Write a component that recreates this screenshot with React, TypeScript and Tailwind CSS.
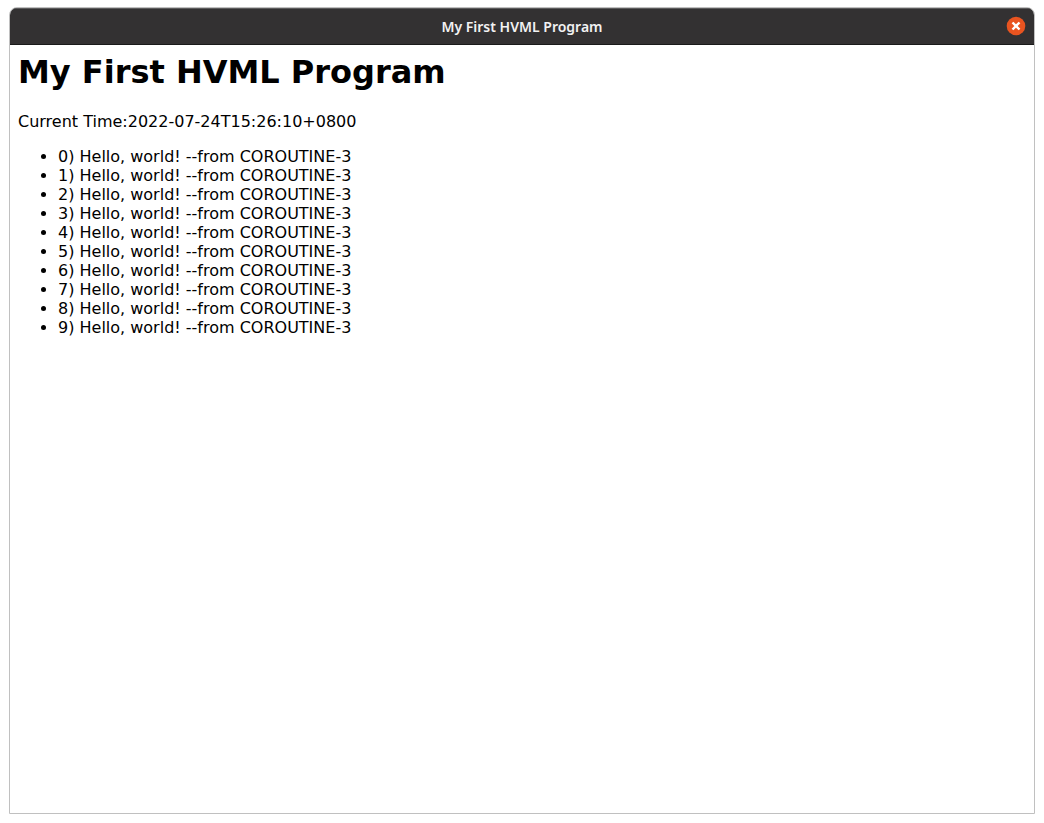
const TITLE = 'My First HVML Program';
const lines = Array.from({ length: 10 }, (_, i) => `${i}) Hello, world! --from COROUTINE-3`);

export default function App() {
  return (
    <div className="flex min-h-screen flex-col bg-white px-[9px] pt-[7px] pb-[9px] font-['DejaVu_Sans',sans-serif] text-black">
      <div className="flex grow flex-col overflow-hidden rounded-t-lg border border-[#c0c0c0]">
        <header className="grid h-[37px] shrink-0 grid-cols-[1fr_auto_1fr] items-center border-t border-b border-t-[#5c5b5c] border-b-[#1a1a1a] bg-[#333132] px-2">
          <span className="col-start-2 font-['Noto_Sans',sans-serif] text-sm font-semibold text-[#f2f2f2]">{TITLE}</span>
          <button type="button" aria-label="Close" className="flex h-full w-5 items-center justify-center justify-self-end pb-px text-[#e95420]">
            <svg viewBox="0 0 20 20" className="size-5">
              <circle cx="10" cy="10" r="9.3" fill="currentColor" />
              <path d="M6.5 6.5l7 7M13.5 6.5l-7 7" fill="none" stroke="white" strokeWidth="2.4" />
            </svg>
          </button>
        </header>
        <main className="p-2">
          <h1 className="text-[32px] leading-[38px] font-bold">{TITLE}</h1>
          <p className="mt-[21px] text-base leading-[19px]">Current Time:2022-07-24T15:26:10+0800</p>
          <ul className="mt-4 list-disc pl-10 text-base leading-[19px]">
            {lines.map((line) => (
              <li key={line}>{line}</li>
            ))}
          </ul>
        </main>
      </div>
    </div>
  );
}
